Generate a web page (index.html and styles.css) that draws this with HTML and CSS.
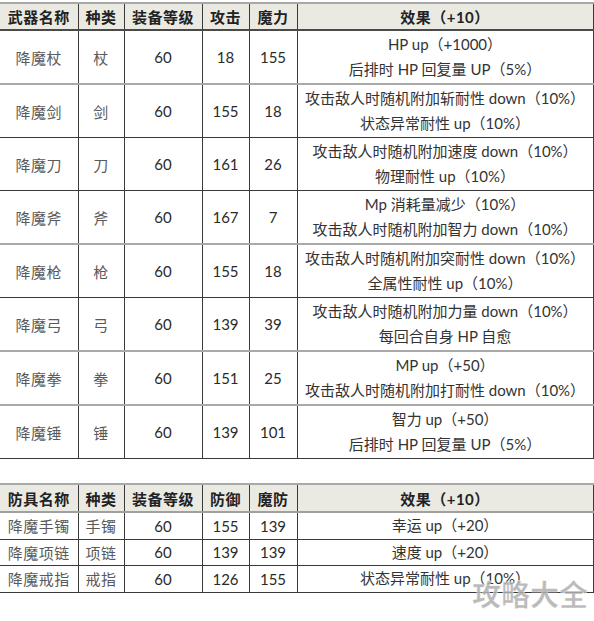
FILE: index.html
```html
<!DOCTYPE html>
<html lang="zh-CN">
<head>
<meta charset="utf-8">
<title>降魔装备</title>
<link rel="stylesheet" href="styles.css">
</head>
<body>
<div class="page">
  <table class="gear weapons">
    <colgroup>
      <col class="c-name"><col class="c-type"><col class="c-lv"><col class="c-s1"><col class="c-s2"><col class="c-eff">
    </colgroup>
    <thead>
      <tr class="head">
        <th>武器名称</th><th>种类</th><th>装备等级</th><th>攻击</th><th>魔力</th><th>效果（+10）</th>
      </tr>
    </thead>
    <tbody>
      <tr class="lt">
        <td class="name">降魔杖</td><td class="name">杖</td><td>60</td><td>18</td><td>155</td>
        <td class="eff"><div>HP up（+1000）</div><div>后排时 HP 回复量 UP（5%）</div></td>
      </tr>
      <tr class="dk">
        <td class="name">降魔剑</td><td class="name">剑</td><td>60</td><td>155</td><td>18</td>
        <td class="eff"><div>攻击敌人时随机附加斩耐性 down（10%）</div><div>状态异常耐性 up（10%）</div></td>
      </tr>
      <tr class="dk">
        <td class="name">降魔刀</td><td class="name">刀</td><td>60</td><td>161</td><td>26</td>
        <td class="eff"><div>攻击敌人时随机附加速度 down（10%）</div><div>物理耐性 up（10%）</div></td>
      </tr>
      <tr class="lt">
        <td class="name">降魔斧</td><td class="name">斧</td><td>60</td><td>167</td><td>7</td>
        <td class="eff"><div>Mp 消耗量减少（10%）</div><div>攻击敌人时随机附加智力 down（10%）</div></td>
      </tr>
      <tr class="dk">
        <td class="name">降魔枪</td><td class="name">枪</td><td>60</td><td>155</td><td>18</td>
        <td class="eff"><div>攻击敌人时随机附加突耐性 down（10%）</div><div>全属性耐性 up（10%）</div></td>
      </tr>
      <tr class="lt">
        <td class="name">降魔弓</td><td class="name">弓</td><td>60</td><td>139</td><td>39</td>
        <td class="eff"><div>攻击敌人时随机附加力量 down（10%）</div><div>每回合自身 HP 自愈</div></td>
      </tr>
      <tr class="lt">
        <td class="name">降魔拳</td><td class="name">拳</td><td>60</td><td>151</td><td>25</td>
        <td class="eff"><div>MP up（+50）</div><div>攻击敌人时随机附加打耐性 down（10%）</div></td>
      </tr>
      <tr class="dk">
        <td class="name">降魔锤</td><td class="name">锤</td><td>60</td><td>139</td><td>101</td>
        <td class="eff"><div>智力 up（+50）</div><div>后排时 HP 回复量 UP（5%）</div></td>
      </tr>
    </tbody>
  </table>

  <table class="gear armor">
    <colgroup>
      <col class="c-name"><col class="c-type"><col class="c-lv"><col class="c-s1"><col class="c-s2"><col class="c-eff">
    </colgroup>
    <thead>
      <tr class="head">
        <th>防具名称</th><th>种类</th><th>装备等级</th><th>防御</th><th>魔防</th><th>效果（+10）</th>
      </tr>
    </thead>
    <tbody>
      <tr class="dk">
        <td class="name">降魔手镯</td><td class="name">手镯</td><td>60</td><td>155</td><td>139</td>
        <td class="eff">幸运 up（+20）</td>
      </tr>
      <tr class="dk">
        <td class="name">降魔项链</td><td class="name">项链</td><td>60</td><td>139</td><td>139</td>
        <td class="eff">速度 up（+20）</td>
      </tr>
      <tr class="dk">
        <td class="name">降魔戒指</td><td class="name">戒指</td><td>60</td><td>126</td><td>155</td>
        <td class="eff">状态异常耐性 up（10%）</td>
      </tr>
    </tbody>
  </table>

  <div class="watermark">攻略大全</div>
</div>
</body>
</html>
```

FILE: styles.css
```css
html, body {
  margin: 0;
  padding: 0;
  background: #ffffff;
}

.page {
  position: relative;
  width: 594px;
  height: 621px;
  overflow: hidden;
  padding-top: 2px;
  box-sizing: border-box;
  font-family: Lato, "Noto Sans CJK SC", sans-serif;
  font-size: 15px;
  color: #2a2a2a;
}

.gear {
  border-collapse: collapse;
  table-layout: fixed;
  width: 593px;
}

.c-name { width: 78px; }
.c-type { width: 46px; }
.c-lv   { width: 78px; }
.c-s1   { width: 47px; }
.c-s2   { width: 48px; }
.c-eff  { width: 296px; }

.gear th,
.gear td {
  padding: 0;
  text-align: center;
  vertical-align: middle;
  border-left: 1px solid #3a3a3a;
  border-right: 1px solid #3a3a3a;
  white-space: nowrap;
}

.gear th:first-child,
.gear td:first-child {
  border-left: none;
}

.head th {
  background: #ebeae2;
  font-weight: bold;
  font-size: 15px;
  color: #222;
  letter-spacing: 0.5px;
}

.weapons .head th {
  height: 25px;
  border-top: 2px solid #a8a8a8;
  border-bottom: 2px solid #4a4a4a;
}

.weapons tbody td {
  height: 52px;
}

.gear tr.lt td {
  border-bottom: 2px solid #a9a9a9;
}

.gear tr.dk td {
  border-bottom: 1px solid #3a3a3a;
}

.armor {
  margin-top: 24px;
}

.armor .head th {
  height: 26px;
  border-top: 2px solid #a8a8a8;
  border-bottom: 2px solid #a0a0a0;
}

.armor tbody td {
  height: 25.5px;
}

.name {
  color: #5a5a5a;
  letter-spacing: 0.5px;
}

.eff {
  color: #333;
  line-height: 25.5px;
}

.watermark {
  position: absolute;
  left: 472px;
  top: 576px;
  font-family: "Noto Sans CJK SC", sans-serif;
  font-weight: bold;
  font-size: 29px;
  line-height: 34px;
  color: rgba(175, 175, 175, 0.85);
  -webkit-text-stroke: 0.6px rgba(255,255,255,0.7);
}
```
